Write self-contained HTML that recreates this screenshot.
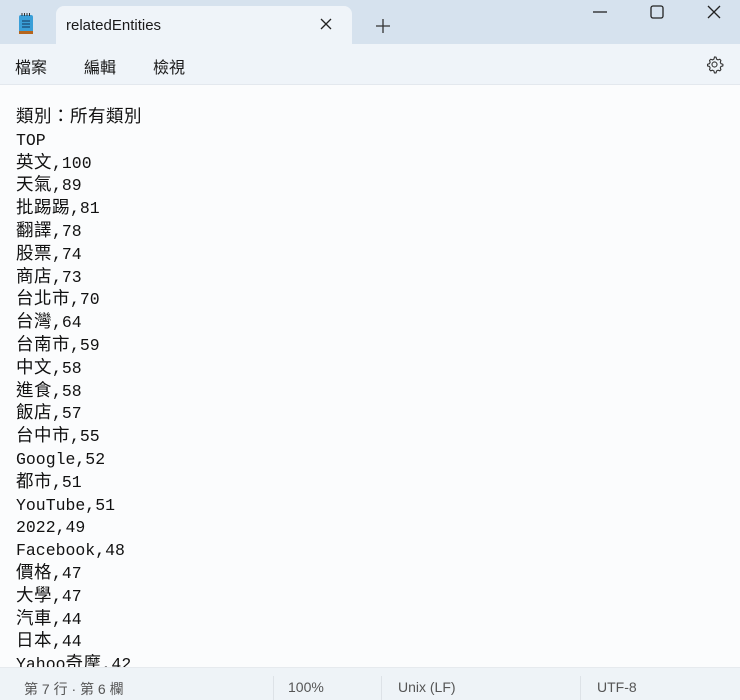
<!DOCTYPE html>
<html><head><meta charset="utf-8"><style>
body{margin:0;width:740px;height:699px;overflow:hidden;background:#fbfcfd;font-family:"Liberation Sans","Noto Sans CJK TC",sans-serif;position:relative}
.title{position:absolute;left:0;top:0;width:740px;height:44px;background:#d6e2ee}
.tab{position:absolute;left:56px;top:6px;width:296px;height:38px;background:#eff4f9;border-radius:8px 8px 0 0}
.menu{position:absolute;left:0;top:44px;width:740px;height:40px;background:#eff4f9;border-bottom:1px solid #e3e8ee}
.menu span{position:absolute;top:10px;font-size:16px;color:#1a1a1a}
.content{position:absolute;left:16px;top:107px;font-family:"Liberation Mono","Noto Sans CJK TC",monospace;font-size:16.5px;line-height:22.8px;color:#111;white-space:pre}
.content i{font-style:normal;font-family:"Noto Sans CJK TC",sans-serif;font-size:17.5px;letter-spacing:0.5px;line-height:0}
.status{position:absolute;left:0;top:667px;width:740px;height:32px;background:#eef3f7;border-top:1px solid #e6eaee;font-size:14px;color:#555}
.status span{position:absolute;top:11px}
.sep{position:absolute;top:8px;width:1px;height:24px;background:#dde2e7}
</style></head><body>
<div class="title">
<svg style="position:absolute;left:18px;top:13px" width="16" height="22" viewBox="0 0 16 22"><rect x="1" y="2" width="14" height="18" rx="2" fill="#3a9fd8"/><rect x="1" y="18" width="14" height="3" fill="#b5651d"/><g stroke="#1b4f7a" stroke-width="1.3"><line x1="4" y1="8" x2="12" y2="8"/><line x1="4" y1="11" x2="12" y2="11"/><line x1="4" y1="14" x2="12" y2="14"/></g><g stroke="#333" stroke-width="1"><line x1="4" y1="0" x2="4" y2="3"/><line x1="6.5" y1="0" x2="6.5" y2="3"/><line x1="9" y1="0" x2="9" y2="3"/><line x1="11.5" y1="0" x2="11.5" y2="3"/></g></svg>
<div class="tab"><span style="position:absolute;left:10px;top:11px;font-size:15px;color:#1a1a1a">relatedEntities</span>
<svg style="position:absolute;left:264px;top:12px" width="12" height="12"><path d="M1 1L11 11M11 1L1 11" stroke="#222" stroke-width="1.3"/></svg></div>
<svg style="position:absolute;left:376px;top:19px" width="14" height="14"><path d="M7 0V14M0 7H14" stroke="#333" stroke-width="1.3"/></svg>
<svg style="position:absolute;left:593px;top:11px" width="14" height="2"><path d="M0 1H14" stroke="#222" stroke-width="1.3"/></svg>
<svg style="position:absolute;left:650px;top:5px" width="14" height="14"><rect x="1" y="1" width="12" height="12" rx="2" fill="none" stroke="#222" stroke-width="1.3"/></svg>
<svg style="position:absolute;left:707px;top:5px" width="14" height="14"><path d="M1 1L13 13M13 1L1 13" stroke="#222" stroke-width="1.3"/></svg>
</div>
<div class="menu"><span style="left:15px">檔案</span><span style="left:84px">編輯</span><span style="left:153px">檢視</span>
<svg style="position:absolute;left:705px;top:11px" width="19" height="19" viewBox="0 0 24 24"><path d="M12 2.5l2 .3.6 2.4 1.8 1 2.3-.8 1.4 1.5-.8 2.3.9 1.8 2.4.7v2.1l-2.4.6-.9 1.8.8 2.3-1.4 1.5-2.3-.8-1.8 1-.6 2.4h-2.1l-.6-2.4-1.8-1-2.3.8-1.5-1.5.8-2.3-.9-1.8-2.4-.6v-2.1l2.4-.7.9-1.8-.8-2.3 1.5-1.5 2.3.8 1.8-1 .6-2.4z" fill="none" stroke="#333" stroke-width="1.4" stroke-linejoin="round"/><circle cx="12" cy="12" r="3.2" fill="none" stroke="#333" stroke-width="1.4"/></svg></div>
<div class="content"><i>類別：所有類別</i>
TOP
<i>英文</i>,100
<i>天氣</i>,89
<i>批踢踢</i>,81
<i>翻譯</i>,78
<i>股票</i>,74
<i>商店</i>,73
<i>台北市</i>,70
<i>台灣</i>,64
<i>台南市</i>,59
<i>中文</i>,58
<i>進食</i>,58
<i>飯店</i>,57
<i>台中市</i>,55
Google,52
<i>都市</i>,51
YouTube,51
2022,49
Facebook,48
<i>價格</i>,47
<i>大學</i>,47
<i>汽車</i>,44
<i>日本</i>,44
Yahoo<i>奇摩</i>,42</div>
<div class="status"><span style="left:24px">第 7 行 · 第 6 欄</span><div class="sep" style="left:273px"></div><span style="left:288px">100%</span><div class="sep" style="left:381px"></div><span style="left:398px">Unix (LF)</span><div class="sep" style="left:580px"></div><span style="left:597px">UTF-8</span></div>
</body></html>
